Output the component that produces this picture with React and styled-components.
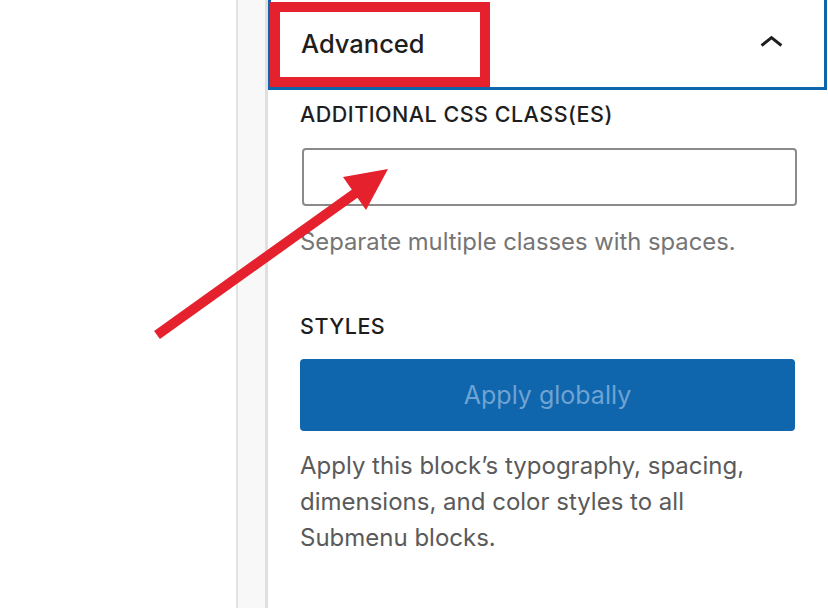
import React from 'react';
import styled, { createGlobalStyle } from 'styled-components';

const GlobalStyle = createGlobalStyle`
  html, body {
    margin: 0;
    padding: 0;
    background: #fff;
  }
  body {
    font-family: Inter, "Noto Sans", "Liberation Sans", sans-serif;
    -webkit-font-smoothing: antialiased;
  }
`;

const Page = styled.div`
  position: relative;
  width: 828px;
  height: 608px;
  display: flex;
  overflow: hidden;
  background: #fff;
`;

const Canvas = styled.div`
  width: 236px;
  flex-shrink: 0;
`;

const Gutter = styled.div`
  width: 27px;
  flex-shrink: 0;
  background: #f8f8f8;
  border-left: 2px solid #e2e2e2;
  border-right: 3px solid #e0e0e0;
`;

const Panel = styled.div`
  flex: 1;
  display: flex;
  flex-direction: column;
`;

const Header = styled.button`
  height: 90px;
  margin-right: 1px;
  box-sizing: border-box;
  display: flex;
  align-items: center;
  justify-content: space-between;
  padding: 0 29px 0 30px;
  background: #fff;
  border: 3px solid #0f66ad;
  border-top: none;
  font: inherit;
  cursor: pointer;
`;

const Title = styled.span`
  font-size: 25.5px;
  font-weight: 500;
  color: #1e1e1e;
`;

const Body = styled.div`
  display: flex;
  flex-direction: column;
  padding: 0 31px 0 32px;
`;

const Label = styled.div`
  font-size: 21.5px;
  font-weight: 500;
  letter-spacing: 0.5px;
  text-transform: uppercase;
  color: #1e1e1e;
  line-height: 30px;
  margin-top: ${p => p.$top}px;
`;

const Input = styled.input`
  margin-top: 19px;
  margin-left: 2px;
  height: 58px;
  box-sizing: border-box;
  border: 2px solid #8a8a8a;
  border-radius: 4px;
  background: #fff;
`;

const Help = styled.p`
  margin: 19px 0 0;
  font-size: 23.8px;
  line-height: 34px;
  color: #757575;
`;

const Button = styled.button`
  margin: 18px 2px 0 0;
  height: 72px;
  border: none;
  border-radius: 4px;
  background: #0f66ad;
  color: #6fa3d2;
  font: inherit;
  font-size: 25px;
  cursor: default;
`;

const Text = styled.p`
  margin: 17px 0 0;
  font-size: 24px;
  line-height: 36px;
  color: #5a5a5a;
  width: 470px;
`;

const Overlay = styled.svg`
  position: absolute;
  left: 0;
  top: 0;
  pointer-events: none;
`;

const ChevronUp = () => (
  <svg width="47" height="47" viewBox="0 0 24 24">
    <path d="M6.5 12.4L12 8l5.5 4.4-.9 1.2L12 10l-4.6 3.6-1-1.2z" fill="#1e1e1e" />
  </svg>
);

export default function App() {
  return (
    <Page>
      <GlobalStyle />
      <Canvas />
      <Gutter />
      <Panel>
        <Header>
          <Title>Advanced</Title>
          <ChevronUp />
        </Header>
        <Body>
          <Label $top={9}>Additional CSS class(es)</Label>
          <Input type="text" />
          <Help>Separate multiple classes with spaces.</Help>
          <Label $top={52}>Styles</Label>
          <Button>Apply globally</Button>
          <Text>
            Apply this block’s typography, spacing, dimensions, and color styles to all Submenu blocks.
          </Text>
        </Body>
      </Panel>
      <Overlay width="828" height="608" viewBox="0 0 828 608">
        <rect x="275" y="7" width="210" height="75" fill="none" stroke="#e5212e" strokeWidth="10" />
        <line x1="157" y1="335" x2="357" y2="192" stroke="#e5212e" strokeWidth="10" />
        <polygon points="388,169 343,177 366,210" fill="#e5212e" />
      </Overlay>
    </Page>
  );
}
